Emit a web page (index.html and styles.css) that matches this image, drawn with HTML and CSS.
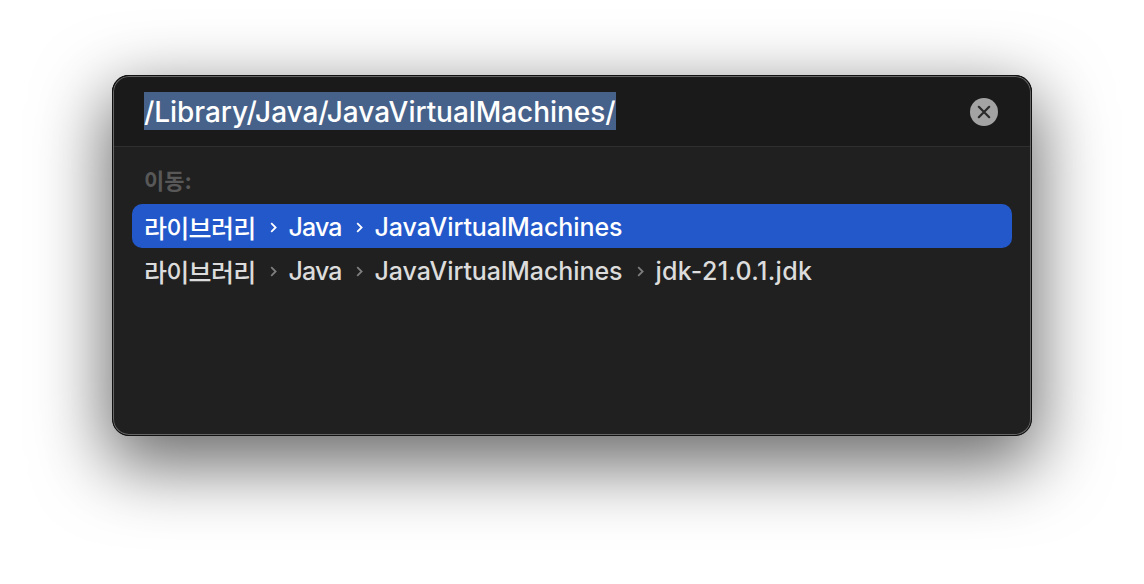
FILE: index.html
```html
<!DOCTYPE html>
<html lang="ko">
<head>
<meta charset="utf-8">
<title>이동</title>
<link rel="stylesheet" href="styles.css">
</head>
<body>
<div class="dialog">
  <div class="head">
    <span class="path">/Library/Java/JavaVirtualMachines/</span>
    <span class="clear"><svg width="14" height="14" viewBox="0 0 14 14"><path d="M1.8 1.8L12.2 12.2M12.2 1.8L1.8 12.2" fill="none" stroke="#2a2a2a" stroke-width="2.2" stroke-linecap="round"/></svg></span>
  </div>
  <div class="main">
    <div class="label">이동:</div>
    <div class="row selected">
      <span class="seg ko">라이브러리</span>
      <svg class="chev" width="7" height="11" viewBox="0 0 7 11"><path d="M1.2 1.2L5.6 5.5L1.2 9.8" fill="none" stroke="currentColor" stroke-width="1.8"/></svg>
      <span class="seg short">Java</span>
      <svg class="chev" width="7" height="11" viewBox="0 0 7 11"><path d="M1.2 1.2L5.6 5.5L1.2 9.8" fill="none" stroke="currentColor" stroke-width="1.8"/></svg>
      <span class="seg long">JavaVirtualMachines</span>
    </div>
    <div class="row">
      <span class="seg ko">라이브러리</span>
      <svg class="chev" width="7" height="11" viewBox="0 0 7 11"><path d="M1.2 1.2L5.6 5.5L1.2 9.8" fill="none" stroke="currentColor" stroke-width="1.8"/></svg>
      <span class="seg short">Java</span>
      <svg class="chev" width="7" height="11" viewBox="0 0 7 11"><path d="M1.2 1.2L5.6 5.5L1.2 9.8" fill="none" stroke="currentColor" stroke-width="1.8"/></svg>
      <span class="seg long">JavaVirtualMachines</span>
      <svg class="chev" width="7" height="11" viewBox="0 0 7 11"><path d="M1.2 1.2L5.6 5.5L1.2 9.8" fill="none" stroke="currentColor" stroke-width="1.8"/></svg>
      <span class="seg file">jdk-21.0.1.jdk</span>
    </div>
  </div>
</div>
</body>
</html>
```
FILE: styles.css
```css
html, body { margin: 0; height: 100%; overflow: hidden; background: #fff; }
body {
  padding: 75px 112px 0;
  box-sizing: border-box;
  font-family: Inter, "Noto Sans CJK KR", sans-serif;
}
.dialog {
  width: 920px;
  height: 361px;
  box-sizing: border-box;
  border-radius: 17px;
  background: #202020;
  overflow: hidden;
  box-shadow: 0 24px 70px 6px rgba(0,0,0,.58);
  position: relative;
}
.dialog::after {
  content: "";
  position: absolute;
  inset: 0;
  border-radius: 17px;
  border: 1px solid #111;
  box-shadow: inset 0 0 0 1px #666;
  pointer-events: none;
}
.head {
  height: 72px;
  box-sizing: border-box;
  border-bottom: 1px solid #2f2f2f;
  background: #1a1a1a;
  display: flex;
  align-items: center;
  justify-content: space-between;
  padding: 0 34px 0 32px;
}
.path {
  font-size: 28px;
  font-weight: 500;
  line-height: 36px;
  padding-top: 2px;
  color: #fff;
  background: #46628a;
  letter-spacing: -0.05px;
  white-space: nowrap;
}
.clear {
  width: 28px;
  height: 28px;
  margin-top: 2px;
  border-radius: 50%;
  background: #a3a3a3;
  display: flex;
  align-items: center;
  justify-content: center;
}
.main { padding: 21px 20px 0; }
.label {
  font-size: 22px;
  font-weight: 700;
  line-height: 26px;
  color: #585858;
  margin: 0 12px 10px;
}
.row {
  height: 44px;
  display: flex;
  align-items: center;
  padding: 2px 12px 0;
  box-sizing: border-box;
  border-radius: 10px;
  font-size: 25px;
  font-weight: 500;
  color: #dcdcdc;
  white-space: nowrap;
}
.row.selected { background: #2258c9; color: #fff; }
.chev { color: #7e7e7e; margin: 0 11.5px 0 14.5px; flex: none; }
.selected .chev { color: #fff; }
.ko { letter-spacing: -0.7px; }
.short { letter-spacing: -0.9px; }
.long { letter-spacing: -0.08px; }
.file { letter-spacing: 0.3px; }
```
